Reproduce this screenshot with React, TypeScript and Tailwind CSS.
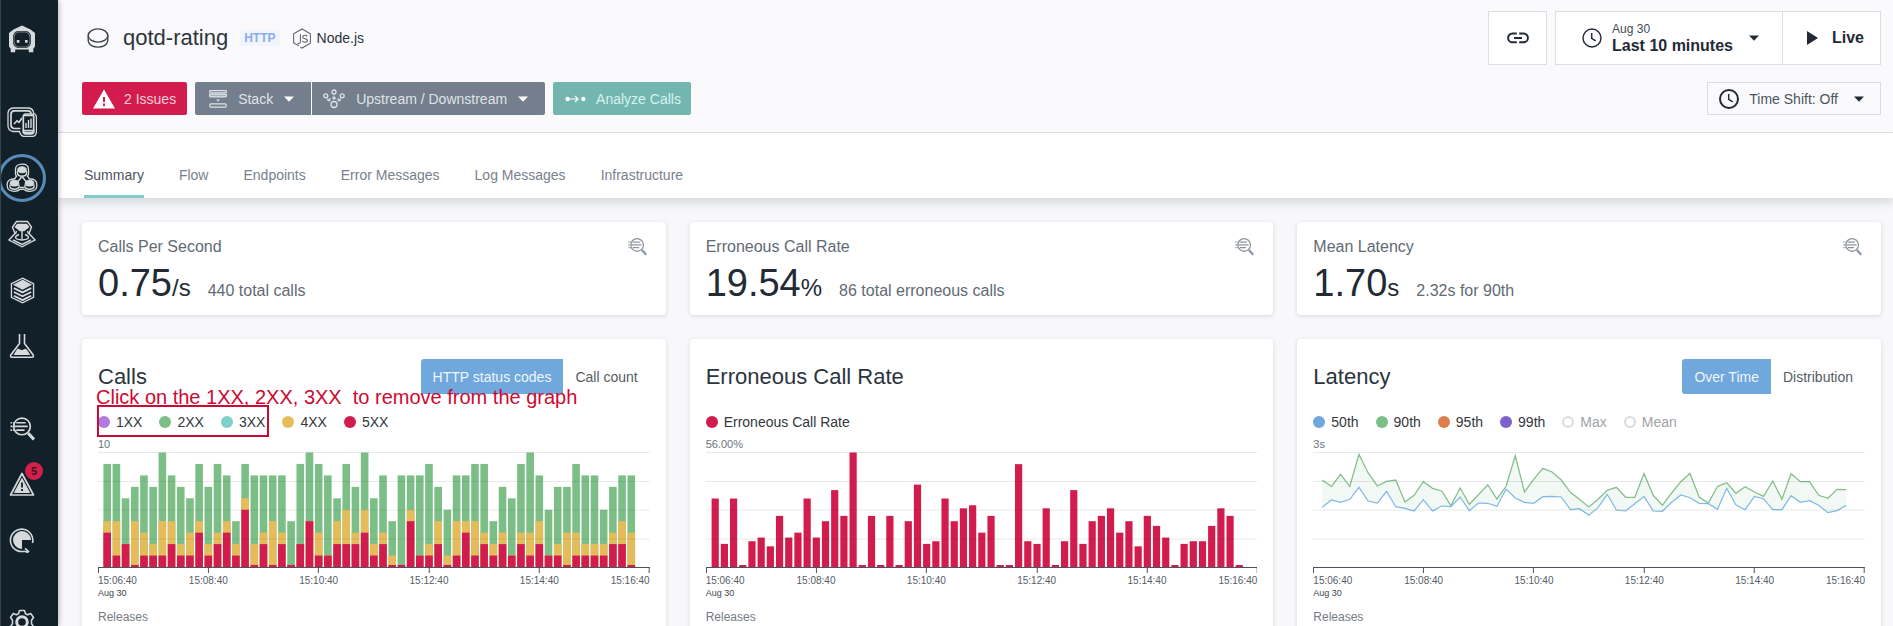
import React from "react";

type Item = { label: string; dot: string; off?: boolean };

/* [total, up to 4XX, up to 5XX] for every ten-second bucket */
const calls: [number, number, number][] = [
  [9, 4, 3], [9, 4, 1], [6, 2, 2], [7, 4, 0], [8, 3, 1], [7, 2, 1], [10, 4, 1], [8, 4, 2], [7, 2, 1], [6, 3, 1],
  [9, 4, 3], [7, 2, 1], [9, 3, 2], [8, 4, 3], [4, 2, 1], [9, 6, 5], [8, 2, 0], [8, 3, 2], [8, 4, 0], [8, 3, 2],
  [4, 0, 0], [9, 2, 2], [10, 4, 4], [9, 3, 1], [8, 1, 1], [6, 4, 2], [9, 5, 2], [7, 3, 2], [10, 5, 3], [6, 2, 1],
  [8, 3, 2], [4, 1, 0], [8, 0, 0], [8, 5, 4], [8, 1, 1], [9, 2, 1], [7, 4, 2], [5, 1, 0], [8, 4, 1], [8, 4, 3],
  [9, 4, 1], [9, 3, 2], [4, 2, 1], [7, 3, 2], [6, 1, 1], [9, 3, 2], [10, 3, 1], [8, 4, 2], [5, 1, 1], [7, 2, 1],
  [7, 3, 0], [9, 3, 1], [8, 2, 1], [8, 2, 1], [5, 2, 1], [7, 3, 2], [8, 4, 2], [8, 3, 0],
];

/* percent */
const errors = [
  33.5, 11.3, 33.5, 0, 12.6, 14.4, 10.1, 25, 14.4, 16.8, 33.5, 14.4, 22.4, 37.6, 25, 56, 0, 25, 0, 25,
  0, 22.4, 40.3, 11.3, 12.6, 33.5, 22.4, 28.7, 30.2, 16.8, 25, 0, 0, 50.3, 12.6, 11.3, 28.7, 0, 12.6, 37.6,
  11.3, 22.4, 25, 28.7, 16.8, 22.4, 10.1, 25, 20.1, 14.4, 0, 11.3, 12.6, 12.6, 20.1, 28.7, 25, 0,
];

/* milliseconds */
const p90 = [
  2270, 2104, 2417, 2104, 2939, 2452, 2113, 2235, 2270, 1696, 1870, 2226, 2052, 1983, 1600, 2061, 1635, 1887, 2148, 1774,
  2104, 2904, 1957, 2287, 2574, 2478, 2270, 1948, 1757, 1565, 1765, 2000, 2078, 1817, 1817, 2443, 1870, 1609, 1930, 2226,
  2443, 1826, 1670, 2104, 2200, 1922, 2096, 1957, 1843, 2243, 1765, 2435, 2226, 2226, 1870, 1791, 2026, 2017,
];
const p50 = [
  1557, 1748, 1687, 1765, 2078, 1722, 1670, 1974, 1574, 1530, 1461, 1757, 1461, 1591, 1574, 1826, 1470, 1670, 1661, 1583,
  2026, 1800, 1687, 1661, 1835, 1843, 1826, 1496, 1522, 1348, 1548, 1896, 1487, 1461, 1652, 1843, 1461, 1452, 1687, 1878,
  1809, 1661, 1652, 1504, 2052, 1617, 1496, 1843, 1783, 1496, 1496, 1861, 1687, 1730, 1609, 1417, 1470, 1609,
];

const W = 552;
const BASE = 115;
const STEP = W / 60;
const cx = (i: number) => (i + 1) * STEP;
const times = ["15:06:40", "15:08:40", "15:10:40", "15:12:40", "15:14:40", "15:16:40"];

function Grid() {
  return (
    <g stroke="#3c4650" strokeOpacity="0.12" strokeWidth="1">
      {[0.5, 29.5, 58, 87].map((y) => (
        <line key={y} x1="0" x2={W} y1={y} y2={y} />
      ))}
    </g>
  );
}

function Plot({ max, label, children }: { max: string; label: string; children: React.ReactNode }) {
  return (
    <div className="mt-1">
      <div className="h-4 text-[11px] leading-4 text-[#6c737b]">{max}</div>
      <svg viewBox={`0 0 ${W} 122`} preserveAspectRatio="none" className="block h-[122px] w-full" role="img" aria-label={label}>
        {children}
        <Grid />
        <g stroke="#4a525b" strokeWidth="1">
          <line x1="0" x2={W} y1="115.5" y2="115.5" />
          {[0.5, 110.5, 220.5, 331.5, 441.5, 551.5].map((x) => (
            <line key={x} x1={x} x2={x} y1="115" y2="121" />
          ))}
        </g>
      </svg>
      <div className="mt-px grid h-3 grid-cols-10 text-[10px] leading-3 text-[#565d66]">
        {times.map((t, i) => (
          <span key={t} className={i === 0 ? "text-left" : i === 5 ? "text-right" : "col-span-2 text-center"}>
            {t}
          </span>
        ))}
      </div>
      <div className="h-3 text-[9px] leading-3 text-[#3c444d]">Aug 30</div>
      <div className="mt-[10px] text-xs leading-4 text-[#737b85]">Releases</div>
    </div>
  );
}

function Legend({ items }: { items: Item[] }) {
  return (
    <div className="mt-[18px] flex h-5 items-center gap-[17px] text-sm leading-5">
      {items.map((it) => (
        <button key={it.label} type="button" aria-pressed={!it.off} className={it.off ? "flex items-center gap-1.5 text-[#a0a3a7]" : "flex items-center gap-1.5 text-[#33373c]"}>
          <span className={`size-3 rounded-full ${it.dot}`} />
          {it.label}
        </button>
      ))}
    </div>
  );
}

function ChartCard({ title, toggles, children }: { title: string; toggles?: [string, string]; children: React.ReactNode }) {
  return (
    <section className="relative rounded bg-white px-4 pt-5 pb-8 shadow-[0_1px_4px_rgba(30,40,60,0.16)]">
      <div className="flex h-[35px] items-center justify-between">
        <h2 className="text-[22px] leading-7 text-[#2c343e]">{title}</h2>
        {toggles && (
          <div className="flex h-full text-sm">
            <button type="button" aria-pressed="true" className="rounded-l-[3px] bg-[#70a7dc] px-3 text-[#eff6fc]">{toggles[0]}</button>
            <button type="button" aria-pressed="false" className="px-3 text-[#555c65]">{toggles[1]}</button>
          </div>
        )}
      </div>
      {children}
    </section>
  );
}

function AnalyzeIcon({ className }: { className: string }) {
  return (
    <svg viewBox="0 0 24 24" className={className} fill="none" stroke="currentColor" strokeWidth="1.6">
      <circle cx="11.5" cy="10" r="8" />
      <path d="M6 6.5h9M0.5 6.5h1.5M3 6.5h1M0.5 10h2M4 10h13M0.5 13.5h1.5M3 13.5h1M6 13.5h8" />
      <path d="M17.5 16.5l5.5 6" strokeWidth="3" />
    </svg>
  );
}

function MetricCard({ label, value, unit, note }: { label: string; value: string; unit: string; note: string }) {
  return (
    <section className="flex justify-between rounded bg-white pt-[15px] pr-[19px] pb-3 pl-4 shadow-[0_1px_4px_rgba(30,40,60,0.16)]">
      <div>
        <h2 className="text-base leading-5 text-[#626a73]">{label}</h2>
        <p className="mt-1.5 flex h-10 items-baseline leading-10 text-[#222a35]">
          <span className="text-[38px]">{value}</span>
          <span className="text-2xl leading-10">{unit}</span>
          <span className="ml-[17px] text-base leading-10 text-[#626a73]">{note}</span>
        </p>
      </div>
      <a href="#analyze" aria-label={`Analyze ${label}`} className="h-5 text-[#8b95a0]">
        <AnalyzeIcon className="size-[19px]" />
      </a>
    </section>
  );
}

function Caret() {
  return (
    <svg viewBox="0 0 10 6" className="h-1.5 w-2.5" fill="currentColor">
      <path d="M0 .5h10L5 5.7z" />
    </svg>
  );
}

function Clock({ w }: { w: number }) {
  return (
    <svg viewBox="0 0 20 20" className="size-5" fill="none" stroke="currentColor" strokeWidth={w}>
      <circle cx="10" cy="10" r="9" />
      <path d="M9.7 5v5.3l4 2.6" strokeWidth="1.5" />
    </svg>
  );
}

function NavItem({ name, children }: { name: string; children: React.ReactNode }) {
  return (
    <a href={`#${name.toLowerCase()}`} aria-label={name} className="relative flex h-14 shrink-0 items-center justify-center">
      {children}
    </a>
  );
}

function Sidebar() {
  return (
    <nav aria-label="Main" className="z-20 flex h-screen w-[58px] shrink-0 flex-col overflow-hidden border-l border-[#35434b] bg-[#122129] pt-[11px] pr-[15px] text-[#d6dadc] shadow-[1px_0_5px_rgba(20,30,45,0.3)]">
      <NavItem name="Home">
        <svg viewBox="0 0 28 28" className="size-7">
          <path d="M14 .5 22.500 4.500l4.500 3.600v13.400l-1.700 2.300v3.400h-4.500v-2.700H7.200v2.700H2.700v-3.400L1 21.500V8.100l4.500-3.600z" fill="#d6dadc" />
          <path d="M10 7h8q4 1 4 5.500v4q0 4.500-4 5.500h-8q-4-1-4-5.500v-4Q6 8 10 7z" fill="#122129" stroke="#122129" strokeWidth="2" />
          <path d="M10 7h8q4 1 4 5.500v4q0 4.500-4 5.500h-8q-4-1-4-5.500v-4Q6 8 10 7z" fill="#122129" stroke="#8d979c" strokeWidth=".8" />
          <path d="M8.800 15h2.600v2.800H8.800zM17 15h2.600v2.800H17z" fill="#d6dadc" />
        </svg>
      </NavItem>
      <div className="mt-[27px]">
        <NavItem name="Websites">
          <svg viewBox="0 0 30 30" className="size-[30px]" fill="none" stroke="currentColor">
            <path d="M12.500 24.500H6q-5-1-5-6V6q.5-4.500 5-5h15.500q4.500.500 5 4.500l.5 1q2.500 1 2.500 4V25q-.5 4-4 4.500h-8q-3.500 0-5-5z" strokeWidth="1.300" />
            <path d="M13.500 21.500H7q-3-.5-3-3.500V7q.2-3 3-3.200h14q3 .2 3 3" strokeWidth="1.700" />
            <path d="M7 17l3-3.200 2 1.600 3-4.400" strokeWidth="1.600" />
            <rect x="16.300" y="7" width="10.400" height="19.800" rx="2.500" strokeWidth="1.700" />
            <path d="M16.500 8.500h10M16.500 23.500h10v2h-10z" strokeWidth="1.600" />
            <path d="M19 21v-5M21.500 21v-8M24 21V11.500" strokeWidth="1.400" />
          </svg>
        </NavItem>
        <NavItem name="Applications">
          <span className="absolute top-1 left-[-3px] size-12 rounded-full border-[3px] border-[#588bb8]" />
          <svg viewBox="0 0 32 30" className="relative h-[30px] w-8" fill="none" stroke="currentColor">
            <path d="M16 1.200c4 0 6.500 2 6.500 5v4.500c0 1-.4 1.800-1 2.500l2 2.800c4.500-.2 7.300 1.800 7.300 5v2c0 3.500-3.500 5.300-7.200 5.300-2.500 0-4.600-.8-5.800-2h-3.600c-1.200 1.200-3.300 2-5.800 2-3.700 0-7.200-1.800-7.200-5.300v-2c0-3.200 2.800-5.200 7.300-5l2-2.800c-.6-.7-1-1.500-1-2.500V6.200c0-3 2.500-5 6.500-5z" strokeWidth="1.300" />
            <ellipse cx="16" cy="6.800" rx="4.300" ry="3" fill="currentColor" />
            <path d="M11.500 8v3c1 3 8 3 9 0V8M16 13.500l-4.500 5.500M16 13.500l4.500 5.500M13.500 24.500h5" strokeWidth="1.400" />
            <ellipse cx="8.500" cy="20.200" rx="4.300" ry="2.900" fill="currentColor" />
            <path d="M4 21.500v2.500c1 3 8 3 9 0v-2.500" strokeWidth="1.400" />
            <ellipse cx="23.500" cy="20.200" rx="4.300" ry="2.900" fill="currentColor" />
            <path d="M19 21.500v2.500c1 3 8 3 9 0v-2.500" strokeWidth="1.400" />
          </svg>
        </NavItem>
        <NavItem name="Platforms">
          <svg viewBox="0 0 28 28" className="size-7" fill="none" stroke="currentColor" strokeWidth="1.400">
            <path d="M8.500 1.500h11l4 5.500-2.500 6.500 6 6.500L14 26.800 1 20l6-6.500L4.500 7z" />
            <path d="M9.500 4.500h9l2 2.500-4.500 3.500h-4L7.500 7z" fill="currentColor" />
            <path d="M14 11v8M8.500 11l-1 3M19.500 11l1 3M11 14.500c-5 2-5 5 3 5.500 8-.5 8-3.500 3-5.500M5 20l9 4.500 9-4.500" />
          </svg>
        </NavItem>
        <NavItem name="Infrastructure">
          <svg viewBox="0 0 26 28" className="h-[27px] w-[25px]" fill="none" stroke="currentColor" strokeWidth="1.400">
            <path d="M13 1.200 24.500 7v14L13 26.800 1.500 21V7z" />
            <path d="M13 3.500 21.500 8 13 12.500 4.500 8z" fill="currentColor" />
            <path d="M4 11.500 13 16l9-4.500M4 15.500 13 20l9-4.500M4 19.500 13 24l9-4.500" strokeWidth="1.900" />
          </svg>
        </NavItem>
        <NavItem name="Tests">
          <svg viewBox="0 0 26 26" className="size-[26px]" fill="none" stroke="currentColor" strokeWidth="1.600">
            <path d="M10.500 1v9.500L1.800 22q-.8 2 1.200 2.300h20q2-.3 1.200-2.300L15.500 10.500V1" />
            <path d="M8.500 15.500l4.500 1.800 3-1.500 2 1 3.300 5.200H4.500z" fill="currentColor" stroke="none" />
          </svg>
        </NavItem>
      </div>
      <div className="mt-[26px]">
        <NavItem name="Analytics">
          <AnalyzeIcon className="size-[25px]" />
        </NavItem>
        <NavItem name="Events">
          <svg viewBox="0 0 26 26" className="size-[26px]" fill="none" stroke="currentColor" strokeLinejoin="round">
            <path d="M13 2.500 24.500 24h-23z" strokeWidth="1.700" />
            <path d="M13 7.500 20.500 21.500h-15z" fill="currentColor" />
            <path d="M13 11.500v5M13 18v2" stroke="#122129" strokeWidth="1.800" />
          </svg>
          <span className="absolute top-1.5 left-6 flex size-[18px] items-center justify-center rounded-full bg-[#d31f4c] text-[11px] leading-none font-bold text-[#421020]">5</span>
        </NavItem>
        <NavItem name="Reports">
          <svg viewBox="0 0 26 26" className="size-[26px]" fill="none" stroke="currentColor">
            <path d="M23.500 16A11.200 11.200 0 1 0 13 24.500h5" strokeWidth="1.600" />
            <path d="M16 21.300l3.500 3.200-3.500 3" strokeWidth="1.600" />
            <path d="M13 4a9 9 0 0 1 9 9h-9v9a9 9 0 0 1 0-18z" fill="currentColor" stroke="none" />
          </svg>
        </NavItem>
      </div>
      <div className="mt-[26px]">
        <NavItem name="Settings">
          <svg viewBox="0 0 26 26" className="size-[26px]" fill="none" stroke="currentColor" strokeLinejoin="round">
            <path d="M10.500 1.500h5l1 3.200 2.200 1 3-1.200 2.800 4-2 2.800v3.400l2 2.800-2.800 4-3-1.200-2.200 1-1 3.200h-5l-1-3.200-2.200-1-3 1.200-2.800-4 2-2.800v-3.400l-2-2.800 2.800-4 3 1.200 2.200-1z" strokeWidth="1.500" />
            <circle cx="13" cy="13" r="5.300" strokeWidth="3" />
          </svg>
        </NavItem>
      </div>
    </nav>
  );
}

function Header() {
  return (
    <header className="border-b border-[#dfe1e5] bg-[#fafafc] pt-[11px] pr-3 pb-[17px] pl-6">
      <div className="flex h-[54px] items-center">
        <svg viewBox="0 0 22 20" className="ml-[5px] h-5 w-[22px] text-[#3b434c]" fill="none" stroke="currentColor" strokeWidth="1.400">
          <ellipse cx="11" cy="7.500" rx="9.800" ry="6.600" />
          <path d="M1.200 7.500v5.300C2 21.200 20 21.200 20.800 12.800V7.500" />
        </svg>
        <h1 className="ml-3.5 text-[22px] leading-7 text-[#2c343e]">qotd-rating</h1>
        <span className="ml-3 rounded-sm bg-[#f0f5fd] px-1 text-xs leading-4 font-bold text-[#8aaaf0]">HTTP</span>
        <svg viewBox="0 0 20 22" className="ml-3 h-[21px] w-5 text-[#5c646d]" fill="none" stroke="currentColor" strokeWidth="1.100">
          <path d="M6.800 18.600 1.200 15.600V6.200L10 1l8.800 5.200v9.600L10 21l-1.800-1" />
          <path d="M8.300 6.500v8.300q-.3 2-2.800 1.200" />
          <path d="M15.500 8.800q-1-1.300-2.800-1.100-2 .3-2 1.800 0 1.400 2.300 1.700 2.700.4 2.700 2 0 1.700-2.400 1.800-2 0-3-1.400" />
        </svg>
        <span className="ml-[5px] text-sm leading-5 text-[#2c343e]">Node.js</span>

        <div className="ml-auto flex h-full gap-2">
          <button type="button" aria-label="Copy link" className="flex w-[59px] items-center justify-center border border-[#dcdfe2] bg-white text-[#222a35]">
            <svg viewBox="0 0 22 12" className="h-3 w-[22px]" fill="none" stroke="currentColor" strokeWidth="2">
              <path d="M9.800 1.500H5.500a4.400 4.400 0 0 0 0 8.800h4.300M12.200 1.500h4.300a4.400 4.400 0 0 1 0 8.800h-4.300M7 5.900h8" />
            </svg>
          </button>
          <div className="flex border border-[#dcdfe2] bg-white text-[#222a35]">
            <button type="button" className="flex items-center border-r border-[#dcdfe2] pr-[23px] pl-[26px]">
              <Clock w={1.4} />
              <span className="ml-2.5 flex flex-col text-left">
                <span className="text-xs leading-4 text-[#444c55]">Aug 30</span>
                <span className="text-base leading-[18px] font-bold">Last 10 minutes</span>
              </span>
              <span className="ml-4"><Caret /></span>
            </button>
            <button type="button" className="flex items-center gap-3.5 pr-4 pl-6 text-base font-bold">
              <svg viewBox="0 0 11 14" className="h-3.5 w-[11px]" fill="currentColor"><path d="M0 0l11 7-11 7z" /></svg>
              Live
            </button>
          </div>
        </div>
      </div>

      <div className="mt-[17px] flex h-[33px] text-sm">
        <button type="button" className="flex items-center gap-[9px] rounded-[2px] bg-[#d31c4e] px-[11px] text-[#f6ccd8]">
          <svg viewBox="0 0 22 20" className="h-5 w-[22px]">
            <path d="M11 .5 22 19.500H0z" fill="#fff" />
            <path d="M11 8v5M11 14.500v2.500" stroke="#d31c4e" strokeWidth="2" />
          </svg>
          2 Issues
        </button>
        <div className="ml-2 flex gap-px text-[#dfe3e7]">
          <button type="button" aria-haspopup="menu" className="flex items-center gap-[11px] rounded-l-[2px] bg-[#737f8d] pr-[17px] pl-3.5">
            <svg viewBox="0 0 18 18" className="size-[18px]" fill="none" stroke="currentColor" strokeWidth="1.200">
              <rect x=".6" y=".6" width="16.800" height="2.300" rx=".8" />
              <rect x=".6" y="4.200" width="16.800" height="2.700" rx=".8" fill="currentColor" fillOpacity=".5" />
              <path d="M7.200 9.500h3.600L9 11.800z" fill="currentColor" stroke="none" />
              <rect x=".8" y="13.800" width="16.400" height="3.400" rx="1.300" />
            </svg>
            Stack
            <span className="text-white"><Caret /></span>
          </button>
          <button type="button" aria-haspopup="menu" className="flex items-center gap-[11px] rounded-r-[2px] bg-[#737f8d] pr-[17px] pl-[11px]">
            <svg viewBox="0 0 22 20" className="h-5 w-[22px]" fill="none" stroke="currentColor" strokeWidth="1.300">
              <circle cx="2.800" cy="6.800" r="2" />
              <circle cx="11" cy="3" r="2" />
              <circle cx="19.200" cy="6.800" r="2" />
              <circle cx="11" cy="15.500" r="3" />
              <path d="M4 10l2.500 1.500M6.800 9v2.800H4.500M11 6.500v3.500M9.300 8.500 11 10.300l1.700-1.800M18 10l-2.500 1.500M15.200 9v2.800h2.300" strokeWidth="1.100" />
            </svg>
            Upstream / Downstream
            <span className="text-white"><Caret /></span>
          </button>
        </div>
        <button type="button" className="ml-2 flex items-center gap-2.5 rounded-[2px] bg-[#73b6af] pr-2.5 pl-3 text-[#d5f3f0]">
          <svg viewBox="0 0 21 8" className="h-2 w-[21px]" fill="#fff" stroke="#fff">
            <circle cx="2.600" cy="4" r="2.200" stroke="none" />
            <circle cx="18.400" cy="4" r="2.200" stroke="none" />
            <path d="M3 4h10M10 1l3 3-3 3" fill="none" strokeWidth="1.200" />
          </svg>
          Analyze Calls
        </button>
        <button type="button" className="ml-auto flex items-center gap-2.5 border border-[#d9dce0] bg-[#fafafc] pr-4 pl-[11px] text-[#222a35]">
          <Clock w={2} />
          <span className="mr-1.5 text-[#4b535c]">Time Shift: Off</span>
          <Caret />
        </button>
      </div>
    </header>
  );
}

function CallsBars() {
  const u = 11.45;
  const x = (i: number) => cx(i) - 3.8;
  return (
    <>
      {calls.map(([t, y, r], i) => {
        const red = Math.max(r, 0.18) * u;
        return (
          <g key={i}>
            <rect x={x(i)} width="7.600" y={BASE - t * u} height={t * u} fill="#7bbf86" />
            {y > 0 && <rect x={x(i)} width="7.600" y={BASE - y * u} height={y * u} fill="#e6bc5a" />}
            <rect x={x(i)} width="7.600" y={BASE - red} height={red} fill="#d31c4e" />
          </g>
        );
      })}
    </>
  );
}

function LatencyLines() {
  const pt = (v: number, i: number) => `${cx(i).toFixed(1)},${(BASE - (v / 3000) * 115).toFixed(1)}`;
  const hi = p90.map(pt);
  const lo = p50.map(pt);
  return (
    <>
      <polygon points={[...hi, ...lo.slice().reverse()].join(" ")} fill="#f2f9f5" />
      <polyline points={hi.join(" ")} fill="none" stroke="#86bf8c" strokeWidth="1.300" />
      <polyline points={lo.join(" ")} fill="none" stroke="#7db8e6" strokeWidth="1.200" />
    </>
  );
}

export default function App() {
  const tabs = ["Summary", "Flow", "Endpoints", "Error Messages", "Log Messages", "Infrastructure"];
  return (
    <div className="flex h-screen overflow-hidden bg-[#f8f8fb] font-['Liberation_Sans',Arial,sans-serif]">
      <Sidebar />
      <main className="min-w-0 flex-1">
        <Header />
        <nav aria-label="Views" className="flex h-[65px] items-end gap-[35px] bg-white pl-[26px] text-sm leading-5 shadow-[0_5px_9px_rgba(30,40,55,0.14)]">
          {tabs.map((t, i) => (
            <a key={t} href={`#${t.toLowerCase().replace(" ", "-")}`} className={i === 0 ? "border-b-[3px] border-[#7fcdc6] pb-2.5 text-[#4d555e]" : "border-b-[3px] border-transparent pb-2.5 text-[#78818c]"}>
              {t}
            </a>
          ))}
        </nav>
        <div className="grid grid-cols-3 gap-6 pt-6 pr-3 pl-6">
          <MetricCard label="Calls Per Second" value="0.75" unit="/s" note="440 total calls" />
          <MetricCard label="Erroneous Call Rate" value="19.54" unit="%" note="86 total erroneous calls" />
          <MetricCard label="Mean Latency" value="1.70" unit="s" note="2.32s for 90th" />

          <ChartCard title="Calls" toggles={["HTTP status codes", "Call count"]}>
            <Legend
              items={[
                { label: "1XX", dot: "bg-[#b07ade]" },
                { label: "2XX", dot: "bg-[#7bbf86]" },
                { label: "3XX", dot: "bg-[#80cfc8]" },
                { label: "4XX", dot: "bg-[#e6bc5a]" },
                { label: "5XX", dot: "bg-[#d31c4e]" },
              ]}
            />
            <Plot max="10" label="Calls by HTTP status code">
              <CallsBars />
            </Plot>
            <p className="pointer-events-none absolute top-[46px] left-3.5 text-xl leading-6 whitespace-pre text-[#cc0a32]">
              {"Click on the 1XX, 2XX, 3XX  to remove from the graph"}
            </p>
            <div className="pointer-events-none absolute top-[66px] left-[15px] h-8 w-[172px] border-2 border-[#cc0a32]" />
          </ChartCard>

          <ChartCard title="Erroneous Call Rate">
            <Legend items={[{ label: "Erroneous Call Rate", dot: "bg-[#d31c4e]" }]} />
            <Plot max="56.00%" label="Erroneous call rate over time">
              {errors.map((e, i) => {
                const h = Math.max((e / 56) * 114.5, 2);
                return <rect key={i} x={cx(i) - 3.6} width="7.200" y={BASE - h} height={h} fill="#d31c4e" />;
              })}
            </Plot>
          </ChartCard>

          <ChartCard title="Latency" toggles={["Over Time", "Distribution"]}>
            <Legend
              items={[
                { label: "50th", dot: "bg-[#70a7dc]" },
                { label: "90th", dot: "bg-[#7bbf86]" },
                { label: "95th", dot: "bg-[#dc7e4b]" },
                { label: "99th", dot: "bg-[#7f61cd]" },
                { label: "Max", dot: "border-2 border-[#d9dbdd]", off: true },
                { label: "Mean", dot: "border-2 border-[#d9dbdd]", off: true },
              ]}
            />
            <Plot max="3s" label="Latency percentiles over time">
              <LatencyLines />
            </Plot>
          </ChartCard>
        </div>
      </main>
    </div>
  );
}
